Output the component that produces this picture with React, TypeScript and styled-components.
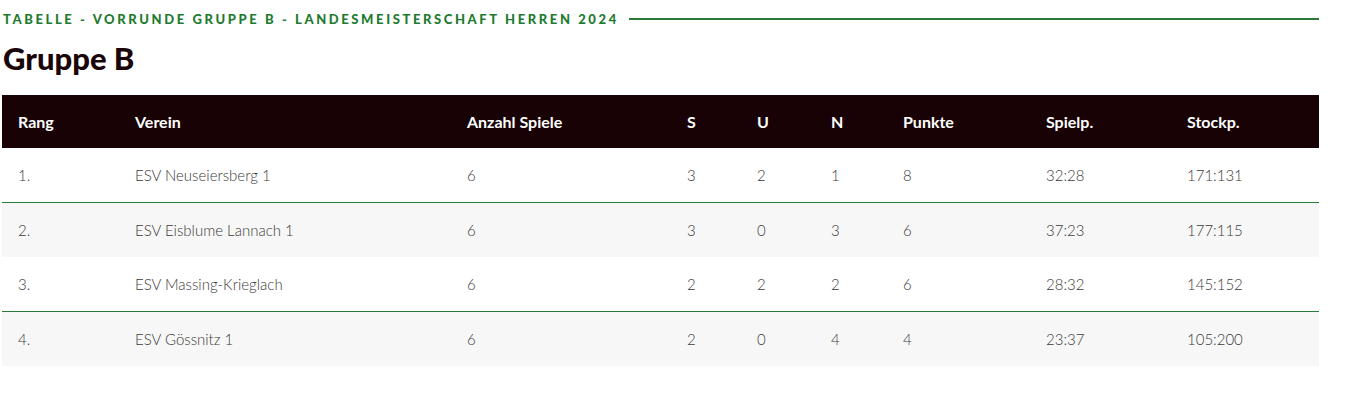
import React from "react";
import styled, { createGlobalStyle } from "styled-components";

const Global = createGlobalStyle`
  html, body { margin: 0; padding: 0; background: #fff; }
  body { font-family: Lato, "Liberation Sans", sans-serif; }
`;

const Page = styled.div`
  width: 1317px;
  padding: 10px 0 0 2px;
`;

const Kicker = styled.div`
  display: flex;
  align-items: center;
  gap: 10px;
  padding-left: 1px;
  height: 18px;
`;

const KickerText = styled.span`
  font-family: Lato, sans-serif;
  font-weight: 900;
  font-size: 13px;
  letter-spacing: 2.6px;
  color: #1e7b2f;
  white-space: nowrap;
`;

const KickerLine = styled.span`
  flex: 1;
  height: 2px;
  background: #2a7a35;
`;

const Title = styled.h2`
  margin: 12px 0 0 1px;
  font-family: Lato, sans-serif;
  font-weight: 900;
  font-size: 31px;
  line-height: 36px;
  color: #1a0508;
`;

const Table = styled.table`
  margin-top: 19px;
  width: 1317px;
  border-collapse: separate;
  border-spacing: 0;
  table-layout: fixed;
`;

const HeadRow = styled.tr`
  background: #180205;
  height: 53px;
`;

const Th = styled.th`
  text-align: left;
  padding: 0 0 0 16px;
  font-family: Lato, sans-serif;
  font-weight: 700;
  font-size: 16px;
  color: #fff;
`;

const Row = styled.tr<{ $alt: boolean }>`
  height: ${(p) => (p.$alt ? "54px" : "55px")};
  background: ${(p) => (p.$alt ? "#f7f7f7" : "#fff")};
`;

const Td = styled.td<{ $line: boolean }>`
  padding: 0 0 0 16px;
  font-family: Lato, sans-serif;
  font-weight: 300;
  font-size: 15px;
  color: #3a3a3a;
  border-bottom: ${(p) => (p.$line ? "1px solid #2a7a35" : "none")};
`;

const cols = [117, 332, 220, 70, 74, 72, 143, 141, 148];
const heads = ["Rang", "Verein", "Anzahl Spiele", "S", "U", "N", "Punkte", "Spielp.", "Stockp."];
const rows = [
  ["1.", "ESV Neuseiersberg 1", "6", "3", "2", "1", "8", "32:28", "171:131"],
  ["2.", "ESV Eisblume Lannach 1", "6", "3", "0", "3", "6", "37:23", "177:115"],
  ["3.", "ESV Massing-Krieglach", "6", "2", "2", "2", "6", "28:32", "145:152"],
  ["4.", "ESV Gössnitz 1", "6", "2", "0", "4", "4", "23:37", "105:200"],
];

export default function App() {
  return (
    <>
      <Global />
      <Page>
        <Kicker>
          <KickerText>TABELLE - VORRUNDE GRUPPE B - LANDESMEISTERSCHAFT HERREN 2024</KickerText>
          <KickerLine />
        </Kicker>
        <Title>Gruppe B</Title>
        <Table>
          <colgroup>
            {cols.map((w, i) => (
              <col key={i} style={{ width: w }} />
            ))}
          </colgroup>
          <thead>
            <HeadRow>
              {heads.map((h) => (
                <Th key={h}>{h}</Th>
              ))}
            </HeadRow>
          </thead>
          <tbody>
            {rows.map((r, i) => (
              <Row key={i} $alt={i % 2 === 1}>
                {r.map((c, j) => (
                  <Td key={j} $line={i % 2 === 0}>
                    {c}
                  </Td>
                ))}
              </Row>
            ))}
          </tbody>
        </Table>
      </Page>
    </>
  );
}
